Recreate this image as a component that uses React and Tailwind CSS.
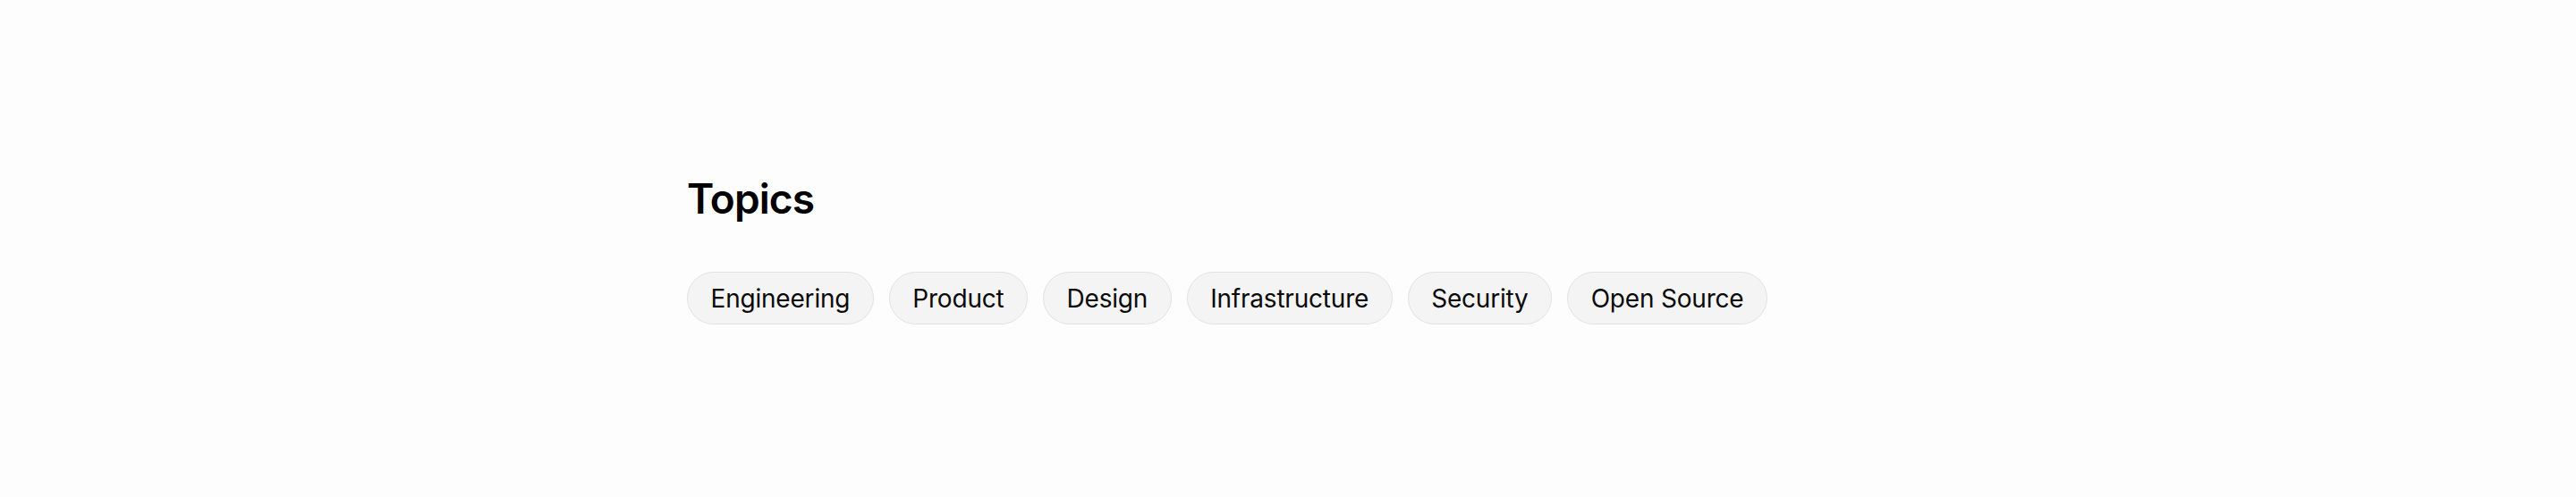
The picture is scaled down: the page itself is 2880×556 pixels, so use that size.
export default function App() {
  const topics = ["Engineering", "Product", "Design", "Infrastructure", "Security", "Open Source"];
  return (
    <div className="min-h-[556px] w-full bg-[#fdfdfd] flex items-center" style={{ fontFamily: "Inter, 'Noto Sans', sans-serif" }}>
      <div className="w-[1344px] mx-auto">
        <h2 className="pt-[2px] text-[46px] leading-[55px] font-semibold text-black tracking-[-0.02em] mb-[54px]">Topics</h2>
        <div className="flex flex-wrap gap-[17px]">
          {topics.map((t) => (
            <span key={t} className="h-[59px] px-[25.5px] flex items-center rounded-full border-[1.5px] border-[#e2e2e2] bg-[#f4f4f4] text-[28px] tracking-[-0.2px] text-[#0a0a0a] leading-none">
              {t}
            </span>
          ))}
        </div>
      </div>
    </div>
  );
}
